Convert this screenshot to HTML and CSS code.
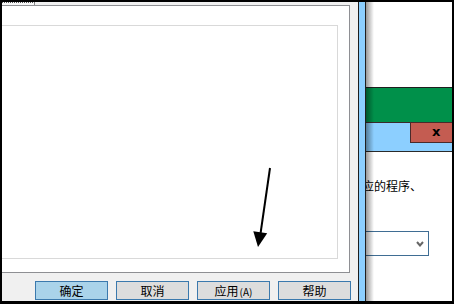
FILE: index.html
```html
<!DOCTYPE html>
<html lang="zh">
<head>
<meta charset="utf-8">
<title>Dialog</title>
<link rel="stylesheet" href="styles.css">
</head>
<body>
<div class="screen">
  <div class="dialog">
    <div class="tabs"><div class="tab"></div></div>
    <div class="panel"><div class="inner"></div></div>
    <div class="buttons">
      <div class="btn btn-default">确定</div>
      <div class="btn">取消</div>
      <div class="btn">应用<span class="acc">(A)</span></div>
      <div class="btn">帮助</div>
    </div>
    <svg class="arrow" width="356" height="299" viewBox="0 0 356 299">
      <line x1="268" y1="166" x2="258.6" y2="231" stroke="#000" stroke-width="2"/>
      <polygon points="256,245 251.3,229.2 265.2,231.3" fill="#000"/>
    </svg>
  </div>
  <div class="divider"></div>
  <div class="window">
    <div class="win-top"></div>
    <div class="win-green"></div>
    <div class="win-bar"><div class="close">x</div></div>
    <div class="win-body">
      <p class="desc">应的程序、</p>
      <div class="select">
        <svg class="chev" width="8" height="6" viewBox="0 0 8 6"><polyline points="1,1 4,4.5 7,1" fill="none" stroke="#666" stroke-width="2"/></svg>
      </div>
    </div>
    <div class="shadow"></div>
  </div>
</div>
</body>
</html>
```

FILE: styles.css
```css
* { box-sizing: border-box; }
html, body { margin: 0; padding: 0; background: #000; }
body { font-family: "Noto Sans CJK SC", "Noto Sans", sans-serif; }

.screen {
  width: 454px;
  height: 304px;
  background: #000;
  padding: 2px 2px 3px 2px;
  display: flex;
  overflow: hidden;
}

.dialog {
  width: 356px;
  flex: none;
  background: #f0f0f0;
  display: flex;
  flex-direction: column;
  position: relative;
  overflow: hidden;
}

.tabs { height: 3px; display: flex; }
.tab {
  width: 33px;
  height: 3px;
  background: #f7f7f7;
  border-right: 1px solid #8a8a8a;
  border-top: 1px dotted #555;
}

.panel {
  margin-left: -1px;
  width: 349px;
  height: 268px;
  background: #fff;
  border: 1px solid #8e8f93;
  padding: 19px 11px 13px 0;
  display: flex;
}
.inner {
  flex: 1;
  border: 1px solid #d9d9d9;
  border-left: none;
}

.buttons {
  display: flex;
  gap: 8px;
  margin-top: 8px;
  padding-left: 33px;
}
.btn {
  width: 73px;
  height: 19px;
  border: 1px solid #3b79ad;
  background: #dddddd;
  font-size: 12px;
  line-height: 17px;
  text-align: center;
  color: #000;
}
.btn-default { background: #aad3ea; }
.acc { font-size: 10px; margin-left: 1px; }

.arrow {
  position: absolute;
  left: 0;
  top: 0;
  pointer-events: none;
}

.divider {
  width: 8px;
  flex: none;
  background: #8ccfff;
  border-left: 1px solid #1e1e1e;
  border-right: 1px solid #1e1e1e;
}

.window {
  flex: 1;
  background: #fff;
  display: flex;
  flex-direction: column;
  position: relative;
  overflow: hidden;
}
.win-top {
  height: 86px;
  border-bottom: 1px solid #1e1e1e;
  flex: none;
}
.win-green {
  height: 34px;
  background: #00904a;
  flex: none;
}
.win-bar {
  height: 30px;
  flex: none;
  background: #8ccfff;
  border-top: 1px solid #3a2a2a;
  border-bottom: 1px solid #2a2a2a;
  display: flex;
  justify-content: flex-end;
}
.close {
  margin-top: -1px;
  margin-right: -2px;
  width: 44px;
  height: 21px;
  background: #c45c51;
  border: 1px solid #4a2a2a;
  font-family: "DejaVu Sans", sans-serif;
  font-weight: bold;
  font-size: 13px;
  line-height: 17px;
  padding-left: 21px;
  color: #000;
}
.win-body { flex: 1; }
.desc {
  margin: 27px 0 0 -4px;
  font-size: 12px;
  line-height: 14px;
  white-space: nowrap;
  color: #000;
}
.select {
  margin: 38px 0 0 -2px;
  width: 65px;
  height: 25px;
  border: 1px solid #3f6d93;
  display: flex;
  align-items: center;
  justify-content: flex-end;
  padding-right: 4px;
}
.chev { display: block; }

.shadow {
  position: absolute;
  left: 0;
  top: 0;
  bottom: 0;
  width: 8px;
  background: linear-gradient(to right, rgba(0,0,0,0.4), rgba(0,0,0,0));
  pointer-events: none;
}
```
